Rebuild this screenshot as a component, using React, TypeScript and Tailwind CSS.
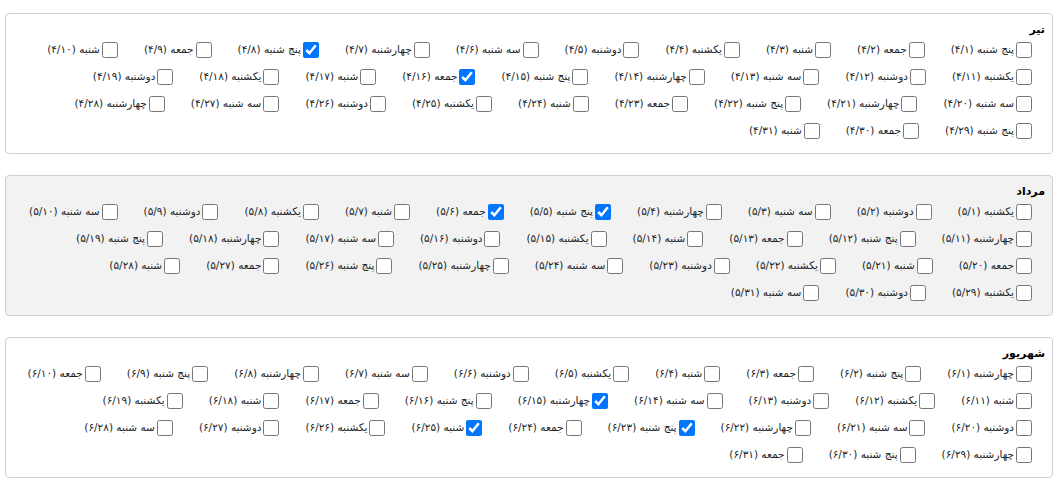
import React from "react";

const WEEK = ["شنبه", "یکشنبه", "دوشنبه", "سه شنبه", "چهارشنبه", "پنج شنبه", "جمعه"];
const fa = (n: number) => String(n).replace(/[0-9]/g, (d) => "۰۱۲۳۴۵۶۷۸۹"[Number(d)]);

type Month = { name: string; m: number; start: number; days: number; checked: number[]; bg: string };

const MONTHS: Month[] = [
  { name: "تیر", m: 4, start: 5, days: 31, checked: [8, 16], bg: "bg-white" },
  { name: "مرداد", m: 5, start: 1, days: 31, checked: [5, 6], bg: "bg-[#f2f2f2]" },
  { name: "شهریور", m: 6, start: 4, days: 31, checked: [15, 23, 25], bg: "bg-white" },
];

const ROWS = [10, 9, 9, 3];

function Item({ label, checked }: { label: string; checked: boolean }) {
  return (
    <label className="flex items-center gap-[2px] h-4 whitespace-nowrap">
      <input type="checkbox" defaultChecked={checked} className="w-4 h-4 m-0 shrink-0" />
      <span>{label}</span>
    </label>
  );
}

function Panel({ month }: { month: Month }) {
  const items = Array.from({ length: month.days }, (_, i) => {
    const d = i + 1;
    return {
      d,
      label: `${WEEK[(month.start + i) % 7]} (${fa(month.m)}/${fa(d)})`,
    };
  });
  const rows: typeof items[] = [];
  let idx = 0;
  for (const n of ROWS) {
    rows.push(items.slice(idx, idx + n));
    idx += n;
  }
  return (
    <div className={`border border-[#cfcfcf] rounded-[4px] ${month.bg} pt-[8px] pb-[14px] pr-[7px]`}>
      <div className="font-bold text-black leading-[16px] text-[11px]">{month.name}</div>
      <div className="mt-[4px] mr-[13px] flex flex-col gap-y-[11px]">
        {rows.map((r, ri) => (
          <div key={ri} className="flex gap-x-[26px]">
            {r.map((it) => (
              <Item key={it.d} label={it.label} checked={month.checked.includes(it.d)} />
            ))}
          </div>
        ))}
      </div>
    </div>
  );
}

export default function App() {
  return (
    <div
      dir="rtl"
      className="w-[1062px] h-[493px] bg-white text-[10.5px] text-[#212529] pt-[13px] pl-[5px] pr-[9px] flex flex-col gap-[21px]"
      style={{ fontFamily: "Tahoma, 'DejaVu Sans', sans-serif" }}
    >
      {MONTHS.map((m) => (
        <Panel key={m.m} month={m} />
      ))}
    </div>
  );
}
